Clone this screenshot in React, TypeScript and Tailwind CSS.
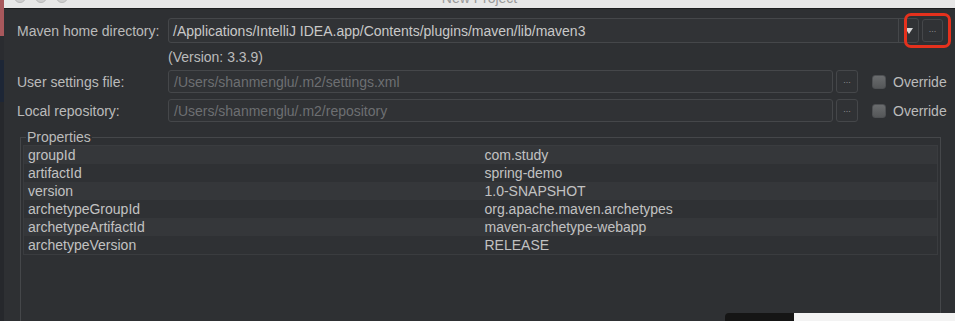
import React from 'react';

const props = [
  ['groupId', 'com.study'],
  ['artifactId', 'spring-demo'],
  ['version', '1.0-SNAPSHOT'],
  ['archetypeGroupId', 'org.apache.maven.archetypes'],
  ['archetypeArtifactId', 'maven-archetype-webapp'],
  ['archetypeVersion', 'RELEASE'],
];

const Dots = ({ className = '' }: { className?: string }) => (
  <div
    className={`flex shrink-0 items-center justify-center rounded-[3px] border border-[#45474a] bg-[#303235] text-[9px] leading-none text-[#8c8e90] ${className}`}
  >
    <span className="-mt-[3px]">...</span>
  </div>
);

const PathRow = ({ label, path }: { label: string; path: string }) => (
  <div className="flex h-[23px] shrink-0 items-center">
    <div className="w-[151px] shrink-0 text-[#bbbbbb]">{label}</div>
    <div className="flex h-full flex-1 items-center rounded-[3px] border border-[#45474a] bg-[#303235] pl-[5px] text-[#6d6f72]">
      {path}
    </div>
    <Dots className="ml-[3px] h-full w-[22px]" />
    <div className="flex w-[97px] shrink-0 items-center pl-[14px]">
      <div className="h-[14px] w-[14px] rounded-[3px] border border-[#4e5053] bg-gradient-to-b from-[#6a6c6e] to-[#555759]" />
      <span className="ml-[7px] text-[#bbbbbb]">Override</span>
    </div>
  </div>
);

export default function App() {
  return (
    <div
      className="relative flex h-[321px] w-[955px] overflow-hidden bg-[#2e3033] text-[14px] leading-[16px]"
      style={{ fontFamily: '"Liberation Sans", Arial, sans-serif' }}
    >
      {/* desktop peeking out on the left */}
      <div className="flex w-[4px] shrink-0 flex-col">
        <div className="h-[36px] shrink-0 bg-[#a8585c]" />
        <div className="h-[24px] shrink-0 bg-[#2a2c30]" />
        <div className="h-[42px] shrink-0 bg-[#1d2636]" />
        <div className="flex-1 bg-[#26282c]" />
      </div>

      <div className="flex min-w-0 flex-1 flex-col">
        {/* title bar */}
        <div className="relative h-[9px] shrink-0 overflow-hidden border-b border-[#1c1d1f] bg-[#e7e7e7]">
          <div className="-mt-[9px] ml-[10px] flex gap-[9px]">
            <div className="h-[12px] w-[12px] rounded-full border border-[#b9b9b9] bg-[#cfcfcf]" />
            <div className="h-[12px] w-[12px] rounded-full border border-[#b9b9b9] bg-[#cfcfcf]" />
            <div className="h-[12px] w-[12px] rounded-full border border-[#b9b9b9] bg-[#cfcfcf]" />
          </div>
          <div className="absolute inset-x-0 -top-[10px] text-center text-[#9a9a9a]">New Project</div>
        </div>

        <div className="flex flex-1 flex-col pl-[13px] pt-[9px]">
          {/* maven home */}
          <div className="relative flex h-[25px] shrink-0 items-center">
            <div className="w-[151px] shrink-0 text-[#bbbbbb]">Maven home directory:</div>
            <div className="flex h-full w-[751px] shrink-0 items-stretch rounded-[3px] border border-[#45474a] bg-[#313336]">
              <div className="flex flex-1 items-center pl-[4px] text-[#c9c9c9]">
                /Applications/IntelliJ IDEA.app/Contents/plugins/maven/lib/maven3
              </div>
              <div className="flex w-[20px] items-center justify-center border-l border-[#45474a]">
                <svg width="8" height="6" viewBox="0 0 8 6">
                  <path d="M0 0 L8 0 L4 6 Z" fill="#d6d6d6" />
                </svg>
              </div>
            </div>
            <Dots className="ml-[3px] h-[23px] w-[21px]" />
            <div className="absolute right-[4px] -top-[5px] h-[35px] w-[47px] rounded-[7px] border-[3px] border-[#e5311d]" />
          </div>

          <div className="mt-[6px] flex h-[16px] shrink-0 items-center pl-[151px] text-[#bbbbbb]">(Version: 3.3.9)</div>

          <div className="mt-[5px] flex shrink-0 flex-col gap-[6px]">
            <PathRow label="User settings file:" path="/Users/shanmenglu/.m2/settings.xml" />
            <PathRow label="Local repository:" path="/Users/shanmenglu/.m2/repository" />
          </div>

          {/* properties */}
          <fieldset className="ml-[3px] mr-[14px] mt-[7px] h-[220px] shrink-0 border border-[#45474a] px-[2px]">
            <legend className="ml-[3px] px-[1px] text-[#bbbbbb]">Properties</legend>
            <div className="h-full border border-[#3a3c3f] bg-[#2f3134]">
              {props.map(([k, v], i) => (
                <div
                  key={k}
                  className={`grid h-[18px] grid-cols-2 items-center text-[#c2c2c2] ${i % 2 === 0 ? 'bg-[#35373a]' : 'bg-[#2f3134]'}`}
                >
                  <div className="pl-[4px]">{k}</div>
                  <div className="pl-[4px]">{v}</div>
                </div>
              ))}
            </div>
          </fieldset>
        </div>
      </div>

      {/* other windows overlapping bottom edge */}
      <div className="absolute bottom-0 left-[725px] h-[8px] w-[69px] rounded-tl-[4px] bg-[#151515]" />
      <div className="absolute bottom-0 left-[794px] h-[8px] w-[161px] bg-[#f3f3f3]" />
    </div>
  );
}
